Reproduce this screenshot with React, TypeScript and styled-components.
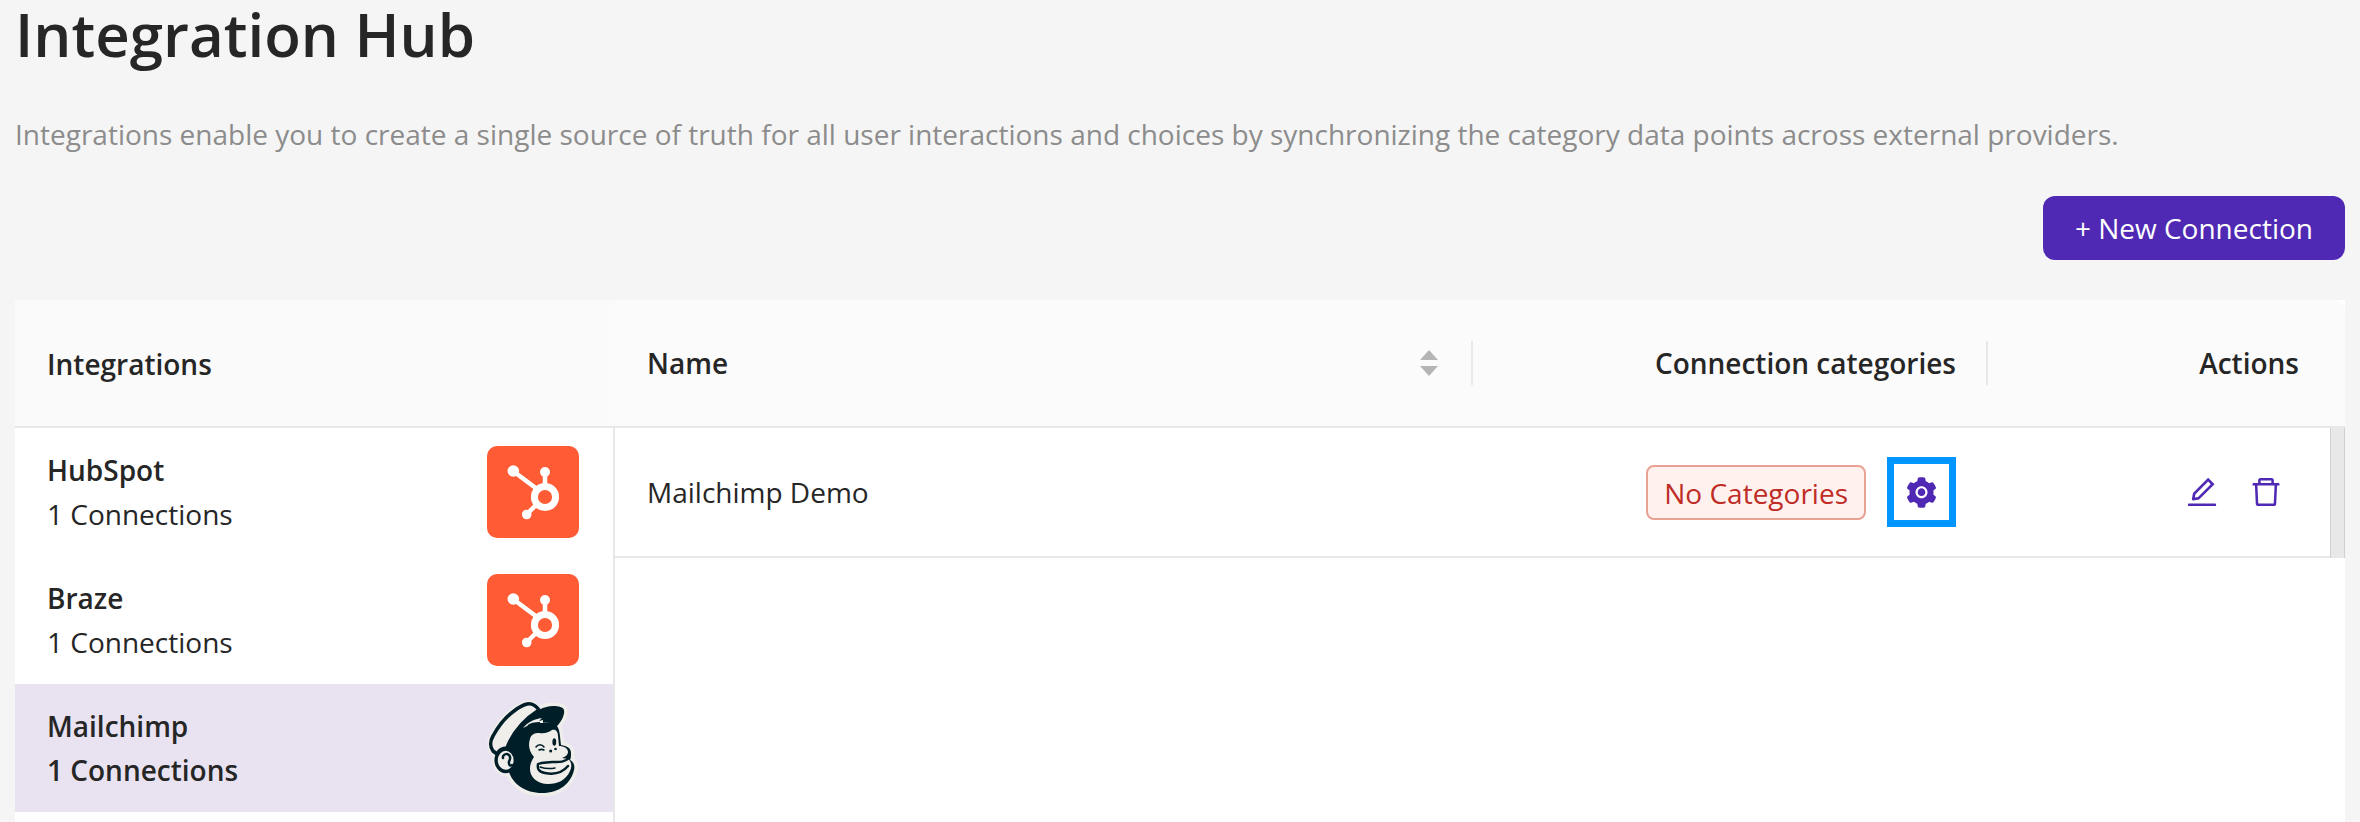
import React from "react";
import styled, { createGlobalStyle } from "styled-components";
import { AiOutlineEdit, AiOutlineDelete, AiFillSetting } from "react-icons/ai";

const GlobalStyle = createGlobalStyle`
  *, *::before, *::after { box-sizing: border-box; }
  html { background: #f5f5f5; }
  body {
    margin: 0;
    height: 100vh;
    overflow: hidden;
    background: #f5f5f5;
    color: #262626;
    font-family: "Open Sans", sans-serif;
    font-size: 28px;
    line-height: 44px;
  }
  #root { height: 100%; }
  button { font: inherit; cursor: pointer; }
`;

const Page = styled.main`
  display: flex;
  flex-direction: column;
  height: 100%;
  padding: 0 15px;
`;

const Title = styled.h1`
  margin: 0;
  font-size: 60px;
  font-weight: 600;
  line-height: 68px;
`;

const Description = styled.p`
  margin: 44px 0 40px;
  color: #8c8c8c;
`;

const Toolbar = styled.div`
  display: flex;
  justify-content: flex-end;
  margin-bottom: 40px;
`;

const PrimaryButton = styled.button`
  height: 64px;
  padding: 0 32px;
  border: 0;
  border-radius: 12px;
  background: #4f29b3;
  color: #fff;
`;

const Panels = styled.div`
  display: grid;
  grid-template-columns: 600px minmax(0, 1fr);
  flex: 1;
  background: #fff;
`;

const Sidebar = styled.section`
  border-right: 2px solid #e8e8e8;
`;

const SidebarTitle = styled.h2`
  display: flex;
  align-items: center;
  height: 128px;
  margin: 0 -2px 0 0;
  padding: 2px 32px 0;
  border-bottom: 2px solid #e8e8e8;
  background: #fafafa;
  font-size: 28px;
  font-weight: 600;
`;

const IntegrationList = styled.ul`
  margin: 0;
  padding: 0;
  list-style: none;
`;

const IntegrationButton = styled.button<{ $selected: boolean }>`
  display: flex;
  align-items: center;
  justify-content: space-between;
  width: 100%;
  height: 128px;
  padding: 0 34px 0 32px;
  border: 0;
  background: ${(p) => (p.$selected ? "#e9e3f1" : "#fff")};
  color: inherit;
  text-align: left;
  font-weight: ${(p) => (p.$selected ? 600 : 400)};
`;

const IntegrationName = styled.span`
  display: block;
  font-weight: 600;
`;

const Logo = styled.svg`
  display: block;
  width: 92px;
  height: 92px;
  overflow: visible;
`;

const Table = styled.table`
  width: 100%;
  table-layout: fixed;
  border-collapse: separate;
  border-spacing: 0;
`;

const HeadCell = styled.th<{ $align?: "right" }>`
  height: 128px;
  padding: 0;
  border-bottom: 2px solid #e8e8e8;
  background: #fbfbfb;
  font-weight: 600;
  text-align: ${(p) => p.$align ?? "left"};

  &:last-child {
    border-top-right-radius: 12px;
  }
`;

const HeadContent = styled.div<{ $align?: "right"; $divided?: boolean; $inset?: number }>`
  display: flex;
  align-items: center;
  justify-content: ${(p) => (p.$align ? "flex-end" : "space-between")};
  height: 44px;
  padding: 0 ${(p) => p.$inset ?? 30}px 0 32px;
  border-right: ${(p) => (p.$divided ? "2px solid #e8e8e8" : "0")};
`;

const SortButton = styled.button`
  display: flex;
  padding: 0 3px;
  border: 0;
  background: none;
`;

const Cell = styled.td<{ $end?: number }>`
  height: 130px;
  padding: 0 ${(p) => p.$end ?? 32}px 0 32px;
  border-bottom: 2px solid #e8e8e8;
`;

const CellContent = styled.div<{ $gap: number }>`
  display: flex;
  align-items: center;
  justify-content: flex-end;
  gap: ${(p) => p.$gap}px;
`;

const ScrollCell = styled.td`
  padding: 0;
  border: 1px solid #d0d0d0;
  border-width: 0 1px;
  background: #e8e8e8;
`;

const Tag = styled.span`
  height: 55px;
  padding: 4px 16px;
  border: 2px solid #e8a195;
  border-radius: 8px;
  background: #fff1ee;
  color: #c02c26;
`;

const IconButton = styled.button<{ $highlighted?: boolean }>`
  display: flex;
  align-items: center;
  justify-content: center;
  width: ${(p) => (p.$highlighted ? 69 : 36)}px;
  height: ${(p) => (p.$highlighted ? 70 : 36)}px;
  padding: 0;
  border: ${(p) => (p.$highlighted ? "7px solid #0095ff" : "0")};
  background: none;
  color: #4f29b3;
`;

function HubSpotLogo() {
  return (
    <Logo viewBox="0 0 92 92" aria-hidden="true">
      <rect width="92" height="92" rx="10" fill="#ff5c35" />
      <g stroke="#fff" strokeWidth="4.5" fill="none">
        <path d="M26 25 50 43M58 26V42M40 68l10-10" />
        <circle cx="58" cy="51" r="10.6" strokeWidth="7" />
      </g>
      <g fill="#fff">
        <circle cx="26.3" cy="25" r="5.8" />
        <circle cx="58" cy="26" r="5" />
        <circle cx="39.7" cy="68.5" r="4.8" />
      </g>
    </Logo>
  );
}

function MailchimpLogo() {
  const hat = "M6 49C3 45 3 39 6 34 12 23 20 14 27 9c5-4 9-6 13-7 5-1 9 2 12 6C38 17 26 30 20 46c-5 0-8 2-10 6z";
  const head =
    "M20 47C26 29 38 16 52 8c5-3 10-4 14-4 6 0 10 1 11 4 1 5-3 12-7 16 3 4 3 11 4 19 6 1 10 3 10 8 0 3 0 5-1 7 4 2 5 6 4 10-3 13-14 23-32 23C38 91 26 82 22 70z";
  return (
    <Logo viewBox="0 0 92 92" aria-hidden="true">
      <g fill="#efeeea" stroke="#efeeea" strokeWidth="7" strokeLinejoin="round">
        <path d={hat} />
        <path d={head} />
        <ellipse cx="18.7" cy="58.3" rx="10" ry="12" />
      </g>
      <path d={head} fill="#001e28" />
      <path d={hat} fill="#efeeea" stroke="#001e28" strokeWidth="3.6" strokeLinejoin="round" />
      <path
        d="M43 37c1-5 5-6 9-6 6 1 10-1 13-3 4-1 6 2 6 6l1 10c4 0 9 2 9 6 0 3-3 5-6 6l6 1c4 3 4 8 2 12-4 9-12 13-22 13-11 0-18-7-18-15 0-5 2-9 4-12-5-6-6-12-4-18z"
        fill="#efeeea"
      />
      <ellipse cx="18.7" cy="58.3" rx="9.6" ry="11.2" fill="#efeeea" stroke="#001e28" strokeWidth="3.4" />
      <g fill="none" stroke="#001e28" strokeLinecap="round" strokeLinejoin="round">
        <path d="M16 56c-1-4 6-6 7-1 1 3-2 4-1 6 0 2 1 3 3 2" strokeWidth="2.5" />
        <path d="M82 56c-5 5-11 4-17 4-5 1-9 0-14 2-1 5 1 8 7 9 10 2 18-1 23-7" strokeWidth="2.4" />
        <path d="M53 65c6 2 10 2 15 1" strokeWidth="1.5" />
        <path d="M49 45c2-3 6-3 8 0M52 48c2-1 3-1 5 0" strokeWidth="1.5" />
      </g>
      <ellipse cx="67.3" cy="40" rx="1.9" ry="3.8" fill="#001e28" />
      <circle cx="63.7" cy="49" r="1.5" fill="#001e28" />
      <circle cx="68.5" cy="47" r="1.3" fill="#001e28" />
      <path
        d="M36 26c5-6 11-9 19-10l-3 3 4-1v3l7 0c-10-1-19 0-27 5zM40 21l8-4"
        fill="#efeeea"
      />
      <path d="M41 24c4-3 8-3 12-3" fill="none" stroke="#001e28" strokeWidth="2" />
    </Logo>
  );
}

const integrations = [
  { name: "HubSpot", Icon: HubSpotLogo, selected: false },
  { name: "Braze", Icon: HubSpotLogo, selected: false },
  { name: "Mailchimp", Icon: MailchimpLogo, selected: true },
];

export default function App() {
  return (
    <Page>
      <GlobalStyle />
      <Title>Integration Hub</Title>
      <Description>
        Integrations enable you to create a single source of truth for all user interactions and choices by
        synchronizing the category data points across external providers.
      </Description>
      <Toolbar>
        <PrimaryButton type="button">+ New Connection</PrimaryButton>
      </Toolbar>
      <Panels>
        <Sidebar>
          <SidebarTitle>Integrations</SidebarTitle>
          <IntegrationList>
            {integrations.map(({ name, Icon, selected }) => (
              <li key={name}>
                <IntegrationButton type="button" $selected={selected} aria-pressed={selected}>
                  <span>
                    <IntegrationName>{name}</IntegrationName>1 Connections
                  </span>
                  <Icon />
                </IntegrationButton>
              </li>
            ))}
          </IntegrationList>
        </Sidebar>
        <div>
          <Table>
            <colgroup>
              <col />
              <col style={{ width: 515 }} />
              <col style={{ width: 342 }} />
              <col style={{ width: 15 }} />
            </colgroup>
            <thead>
              <tr>
                <HeadCell scope="col">
                  <HeadContent $divided>
                    Name
                    <SortButton type="button" aria-label="Sort by name">
                      <svg width="18" height="26" viewBox="0 0 18 26" fill="#b5b5b5">
                        <path d="M9 0 18 10H0zM0 16h18L9 26z" />
                      </svg>
                    </SortButton>
                  </HeadContent>
                </HeadCell>
                <HeadCell scope="col">
                  <HeadContent $align="right" $divided>
                    Connection categories
                  </HeadContent>
                </HeadCell>
                <HeadCell scope="col" colSpan={2}>
                  <HeadContent $align="right" $inset={46}>
                    Actions
                  </HeadContent>
                </HeadCell>
              </tr>
            </thead>
            <tbody>
              <tr>
                <Cell>Mailchimp Demo</Cell>
                <Cell>
                  <CellContent $gap={21}>
                    <Tag>No Categories</Tag>
                    <IconButton type="button" $highlighted aria-label="Configure categories">
                      <AiFillSetting size={35} />
                    </IconButton>
                  </CellContent>
                </Cell>
                <Cell $end={46}>
                  <CellContent $gap={28}>
                    <IconButton type="button" aria-label="Edit connection">
                      <AiOutlineEdit size={36} />
                    </IconButton>
                    <IconButton type="button" aria-label="Delete connection">
                      <AiOutlineDelete size={36} />
                    </IconButton>
                  </CellContent>
                </Cell>
                <ScrollCell />
              </tr>
            </tbody>
          </Table>
        </div>
      </Panels>
    </Page>
  );
}
